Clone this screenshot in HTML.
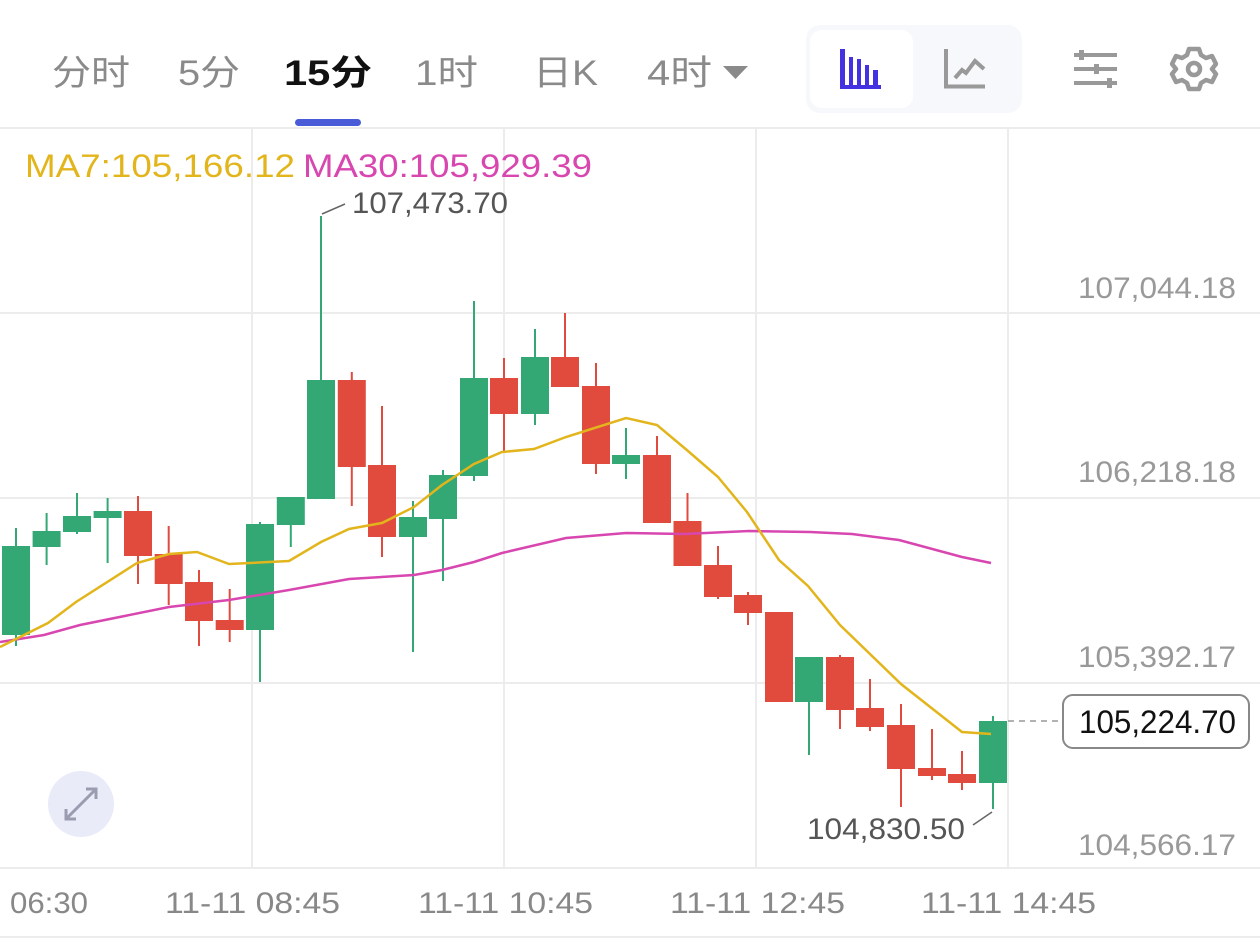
<!DOCTYPE html>
<html><head><meta charset="utf-8"><style>
html,body{margin:0;padding:0;background:#fff;}
body{width:1260px;height:938px;overflow:hidden;position:relative;font-family:"Liberation Sans","Noto Sans CJK SC",sans-serif;}
svg{position:absolute;left:0;top:0}
</style></head><body>
<svg width="1260" height="938" viewBox="0 0 1260 938" font-family="Liberation Sans, Noto Sans CJK SC, sans-serif">
<!-- tabs -->
<g font-size="35" fill="#8a8a8a" lengthAdjust="spacingAndGlyphs">
<text x="52" y="85" textLength="78" lengthAdjust="spacingAndGlyphs">分时</text>
<text x="178" y="85" textLength="62" lengthAdjust="spacingAndGlyphs">5分</text>
<text x="284" y="85" fill="#111" font-weight="bold" textLength="88" lengthAdjust="spacingAndGlyphs">15分</text>
<text x="415" y="85" textLength="63" lengthAdjust="spacingAndGlyphs">1时</text>
<text x="533" y="85" textLength="65" lengthAdjust="spacingAndGlyphs">日K</text>
<text x="647" y="85" textLength="65" lengthAdjust="spacingAndGlyphs">4时</text>
</g>
<path d="M723 66 L748 66 L735.5 79 Z" fill="#8a8a8a"/>
<rect x="295" y="119" width="66" height="7" rx="3.5" fill="#4a5bd8"/>
<!-- toggle -->
<rect x="806" y="25" width="216" height="88" rx="14" fill="#f6f8fc"/>
<rect x="810" y="30" width="103" height="78" rx="12" fill="#fff"/>
<g fill="#4432e0">
<rect x="840" y="49" width="5" height="39"/>
<rect x="840" y="85" width="41" height="4"/>
<rect x="849" y="57" width="4" height="30"/>
<rect x="857" y="59" width="4" height="28"/>
<rect x="865" y="65" width="4" height="22"/>
<rect x="873" y="70" width="5" height="17"/>
</g>
<g fill="none" stroke="#999" stroke-width="4">
<path d="M946 49 V86.5 H985"/>
<path d="M955 78 L962 70 L966 73 L975 61 L984 69"/>
<path d="M1074 55 H1117 M1074 69 H1117 M1074 83 H1117" stroke-width="4"/>
</g>
<g fill="#999">
<rect x="1079" y="50" width="5" height="10"/>
<rect x="1094" y="64" width="5" height="10"/>
<rect x="1107" y="78" width="5" height="10"/>
</g>
<g transform="translate(1194,69)">
<path d="M-5 -20 L5 -20 L7 -14 L12 -11 L18 -13 L22 -5 L18 0 L22 5 L18 13 L12 11 L7 14 L5 20 L-5 20 L-7 14 L-12 11 L-18 13 L-22 5 L-18 0 L-22 -5 L-18 -13 L-12 -11 L-7 -14 Z" fill="none" stroke="#999" stroke-width="4.5" stroke-linejoin="round"/>
<circle r="6" fill="none" stroke="#999" stroke-width="4.5"/>
</g>
<!-- grid -->
<g stroke="#ececec" stroke-width="2">
<path d="M0 128 H1260 M0 313 H1260 M0 498 H1260 M0 683 H1260 M0 868 H1260 M0 937 H1260"/>
<path d="M252 128 V868 M504 128 V868 M756 128 V868 M1008 128 V868"/>
</g>
<!-- MA label -->
<text x="25" y="177" font-size="32" fill="#e3b51c" textLength="270" lengthAdjust="spacingAndGlyphs">MA7:105,166.12</text>
<text x="303" y="177" font-size="32" fill="#d846b0" textLength="289" lengthAdjust="spacingAndGlyphs">MA30:105,929.39</text>
<text x="352" y="213" font-size="30" fill="#555" textLength="156" lengthAdjust="spacingAndGlyphs">107,473.70</text>
<path d="M322 214 L345 204" stroke="#666" stroke-width="1.5"/>
<!-- axis labels -->
<g font-size="30" fill="#999">
<text x="1078" y="298" textLength="158" lengthAdjust="spacingAndGlyphs">107,044.18</text>
<text x="1078" y="482" textLength="158" lengthAdjust="spacingAndGlyphs">106,218.18</text>
<text x="1078" y="667" textLength="158" lengthAdjust="spacingAndGlyphs">105,392.17</text>
<text x="1078" y="855" textLength="158" lengthAdjust="spacingAndGlyphs">104,566.17</text>
</g>
<g font-size="30" fill="#888">
<text x="10" y="913" textLength="78" lengthAdjust="spacingAndGlyphs">06:30</text>
<text x="165" y="913" textLength="175" lengthAdjust="spacingAndGlyphs">11-11 08:45</text>
<text x="418" y="913" textLength="175" lengthAdjust="spacingAndGlyphs">11-11 10:45</text>
<text x="670" y="913" textLength="175" lengthAdjust="spacingAndGlyphs">11-11 12:45</text>
<text x="921" y="913" textLength="175" lengthAdjust="spacingAndGlyphs">11-11 14:45</text>
</g>
<!-- candles -->
<g id="c">
<g stroke="#33a875" fill="#33a875" stroke-width="2">
<path d="M16 528V646M46.6 513V565M77 493V534M107.6 498V563M260 522V682M290.8 498V547M321 216V498M413 501V652M443 470V581M474 301V481M535 329V425M626 428V479M809 658V755M993 716V809"/>
<rect x="3" y="547" width="26" height="87"/>
<rect x="33.6" y="532" width="26" height="14"/>
<rect x="64" y="517" width="26" height="14"/>
<rect x="94.6" y="512" width="26" height="5"/>
<rect x="247" y="525" width="26" height="104"/>
<rect x="277.8" y="498" width="26" height="26"/>
<rect x="308" y="381" width="26" height="117"/>
<rect x="400" y="518" width="26" height="18"/>
<rect x="430" y="476" width="26" height="42"/>
<rect x="461" y="379" width="26" height="96"/>
<rect x="522" y="358" width="26" height="55"/>
<rect x="613" y="456" width="26" height="7"/>
<rect x="796" y="658" width="26" height="43"/>
<rect x="980" y="722" width="26" height="60"/>
</g>
<g stroke="#e04b3e" fill="#e04b3e" stroke-width="2">
<path d="M138 496V584M168.7 526V605M199 570V646M229.7 589V642M351.8 372V506M382 406V557M504 358V453M565 313V386M596 363V474M657 436V522M687.5 493V565M718 546V599M748 592V625M779 613V701M840 655V729M870 679V731M901 704V807M932 729V780M962 751V790"/>
<rect x="125" y="512" width="26" height="43"/>
<rect x="155.7" y="555" width="26" height="28"/>
<rect x="186" y="583" width="26" height="37"/>
<rect x="216.7" y="621" width="26" height="8"/>
<rect x="338.8" y="381" width="26" height="85"/>
<rect x="369" y="466" width="26" height="70"/>
<rect x="491" y="379" width="26" height="34"/>
<rect x="552" y="358" width="26" height="28"/>
<rect x="583" y="387" width="26" height="76"/>
<rect x="644" y="456" width="26" height="66"/>
<rect x="674.5" y="522" width="26" height="43"/>
<rect x="705" y="566" width="26" height="30"/>
<rect x="735" y="596" width="26" height="16"/>
<rect x="766" y="613" width="26" height="88"/>
<rect x="827" y="658" width="26" height="51"/>
<rect x="857" y="709" width="26" height="17"/>
<rect x="888" y="726" width="26" height="42"/>
<rect x="919" y="769" width="26" height="6"/>
<rect x="949" y="775" width="26" height="7"/>
</g>
</g>
<!-- MA lines -->
<polyline fill="none" stroke="#d846b0" stroke-width="2.5" points="0,642 44,635 80,625 169,607 229,600 289,590 349,579 414,575 442,570 474,562 502,553 566,538 626,533 684,534 749,531 810,532 852,534 899,540 962,557 991,563"/>
<polyline fill="none" stroke="#e3b51c" stroke-width="2.5" points="0,647 48,623 76,602 137,563 169,554 197,552 229,564 289,561 321,542 349,529 382,523 414,507 442,485 474,464 502,452 534,449 566,437 626,418 657,425 688,451 718,477 747,512 779,560 808,586 840,625 901,684 962,732 991,734"/>
<!-- last price -->
<path d="M1008 721 H1062" stroke="#999" stroke-width="1.5" stroke-dasharray="6,5"/>
<rect x="1063" y="695" width="186" height="53" rx="10" fill="#fff" stroke="#888" stroke-width="2"/>
<text x="1079" y="733" font-size="32" fill="#111" textLength="157" lengthAdjust="spacingAndGlyphs">105,224.70</text>
<text x="807" y="839" font-size="30" fill="#555" textLength="158" lengthAdjust="spacingAndGlyphs">104,830.50</text>
<path d="M973 825 L992 812" stroke="#666" stroke-width="1.5"/>
<!-- expand -->
<circle cx="81" cy="804" r="33" fill="#e9ebf9"/>
<g stroke="#9a9cb0" stroke-width="3" fill="none">
<path d="M66 819 L96 789 M86 789 H96 V799 M66 809 V819 H76"/>
</g>
</svg>
</body></html>
